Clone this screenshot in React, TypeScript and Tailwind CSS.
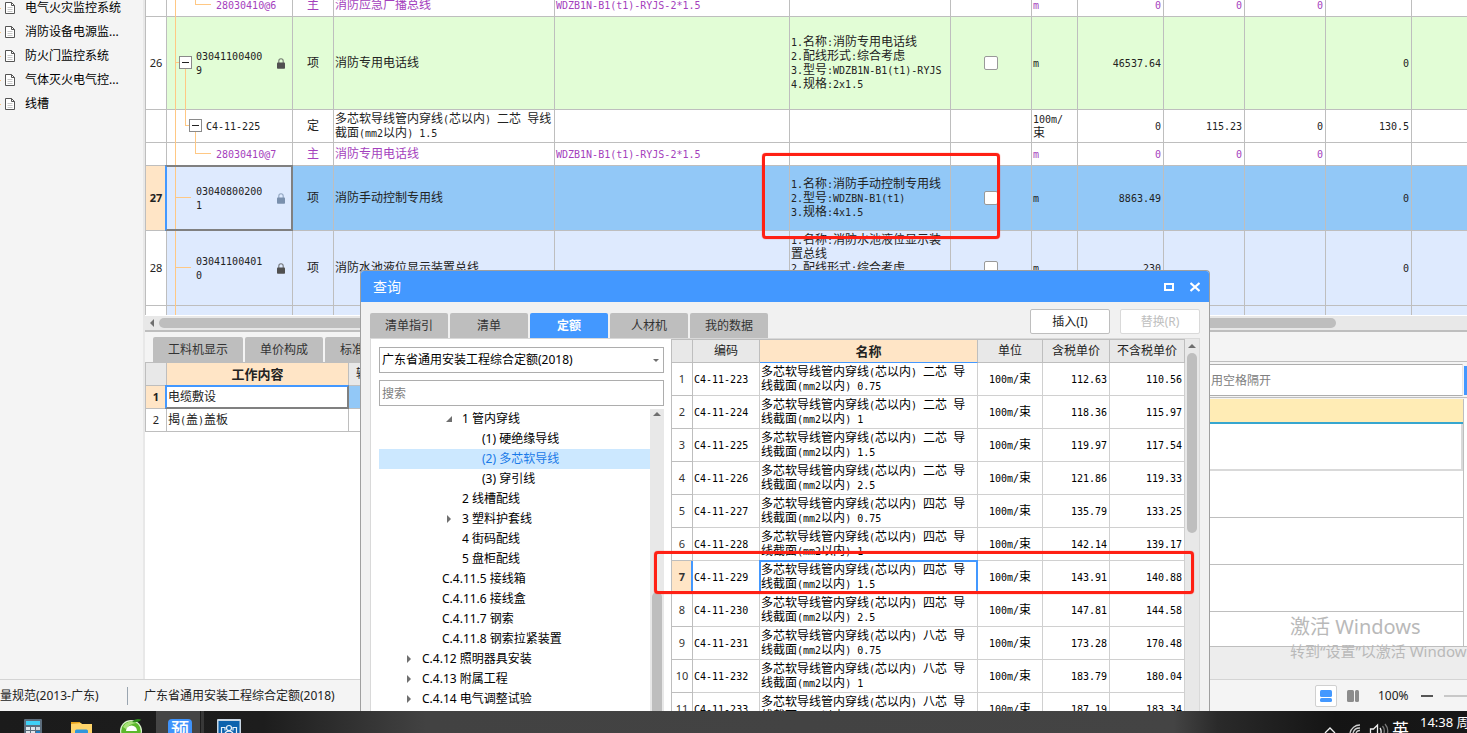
import React from "react";

const LINE = "border-[#bebebe]";

/** Grid text: Latin runs take half the width of a CJK glyph. */
function Mixed({ text }: { text: string }) {
  const lines = text.split("\n");
  return (
    <>
      {lines.map((line, i) => (
        <span key={i} className="block whitespace-pre leading-[14px]">
          {(line.match(/[\x00-\x7f]+|[^\x00-\x7f]+/g) || []).map((run, j) =>
            run.charCodeAt(0) < 128 ? (
              <span key={j} className="text-[10px] leading-none [font-family:'DejaVu_Sans_Mono','Liberation_Mono',monospace]">
                {run}
              </span>
            ) : (
              <span key={j}>{run}</span>
            ),
          )}
        </span>
      ))}
    </>
  );
}

function FileIcon() {
  return (
    <svg className="h-3 w-[10px] shrink-0" viewBox="0 0 10 12" fill="none">
      <path d="M.5.5h6l3 3v8h-9z" fill="#fff" stroke="#555" />
      <path d="M6.5.5v3h3" stroke="#555" />
      <path d="M2.5 5.5h5M2.5 7.5h5M2.5 9.5h5" stroke="#c8c8c8" />
    </svg>
  );
}

function LockIcon({ className }: { className: string }) {
  return (
    <svg className={`h-[11px] w-2 shrink-0 ${className}`} viewBox="0 0 8 11" fill="none">
      <path d="M1.8 5V3a2.2 2.2 0 0 1 4.4 0v2" stroke="currentColor" strokeWidth="1.1" opacity=".75" />
      <rect y="4.6" width="8" height="6.2" rx=".8" fill="currentColor" />
    </svg>
  );
}

const GUIDE = "absolute bg-[#ffc884]";

function Expander({ className }: { className: string }) {
  return (
    <button
      type="button"
      aria-label="折叠"
      className={`absolute top-1/2 -mt-[7px] flex size-[13px] items-center justify-center border border-[#8a8a8a] bg-white ${className}`}
    >
      <span className="h-px w-[7px] bg-[#222]" />
    </button>
  );
}

type Kind = "item" | "quota" | "material" | "leaf" | "blank";
interface BillRow {
  no: string;
  kind: Kind;
  code: string;
  type: string;
  name: string;
  model?: string;
  spec?: string;
  check?: boolean;
  unit: string;
  nums: string[];
  height: string;
  tone: string;
  selected?: boolean;
  muted?: boolean;
}

const billRows: BillRow[] = [
  { no: "", kind: "material", code: "28030410@6", type: "主", name: "消防应急广播总线", model: "WDZB1N-B1(t1)-RYJS-2*1.5", unit: "m", nums: ["0", "0", "0", ""], height: "h-[23px]", tone: "bg-white", muted: true },
  { no: "26", kind: "item", code: "03041100400\n9", type: "项", name: "消防专用电话线", spec: "1.名称:消防专用电话线\n2.配线形式:综合考虑\n3.型号:WDZB1N-B1(t1)-RYJS\n4.规格:2x1.5", check: true, unit: "m", nums: ["46537.64", "", "", "0"], height: "h-[93px]", tone: "bg-[#e2fdd6]" },
  { no: "", kind: "quota", code: "C4-11-225", type: "定", name: "多芯软导线管内穿线(芯以内) 二芯 导线\n截面(mm2以内) 1.5", unit: "100m/\n束", nums: ["0", "115.23", "0", "130.5"], height: "h-[33px]", tone: "bg-white" },
  { no: "", kind: "material", code: "28030410@7", type: "主", name: "消防专用电话线", model: "WDZB1N-B1(t1)-RYJS-2*1.5", unit: "m", nums: ["0", "0", "0", ""], height: "h-[23px]", tone: "bg-white", muted: true },
  { no: "27", kind: "leaf", code: "03040800200\n1", type: "项", name: "消防手动控制专用线", spec: "1.名称:消防手动控制专用线\n2.型号:WDZBN-B1(t1)\n3.规格:4x1.5", check: true, unit: "m", nums: ["8863.49", "", "", "0"], height: "h-[65px]", tone: "bg-[#92c8f7]", selected: true },
  { no: "28", kind: "leaf", code: "03041100401\n0", type: "项", name: "消防水池液位显示装置总线", spec: "1.名称:消防水池液位显示装\n置总线\n2.配线形式:综合考虑\n3.型号:WDZBN-B1(t1)\n4.规格:2x1.5", check: true, unit: "m", nums: ["230", "", "", "0"], height: "h-[75px]", tone: "bg-[#deeafe]" },
  { no: "", kind: "blank", code: "", type: "", name: "", unit: "", nums: ["", "", "", ""], height: "h-[40px]", tone: "bg-[#deeafe]" },
];

const CELL = `border-r border-b ${LINE} p-0 align-middle`;

function CodeCell({ row }: { row: BillRow }) {
  const { kind } = row;
  return (
    <td className={`relative ${CELL} ${row.selected ? "bg-[#deeafe]" : ""}`}>
      <span className={`${GUIDE} -bottom-px left-2 top-0 w-px`} />
      {kind === "item" && (
        <>
          <span className={`${GUIDE} left-2 top-1/2 -mt-px h-px w-1`} />
          <span className={`${GUIDE} -bottom-px left-[18px] top-1/2 w-px`} />
          <Expander className="left-3" />
        </>
      )}
      {kind === "quota" && (
        <>
          <span className={`${GUIDE} bottom-1/2 left-[18px] top-0 w-px`} />
          <span className={`${GUIDE} left-[18px] top-1/2 -mt-px h-px w-2`} />
          <span className={`${GUIDE} -bottom-px left-7 top-1/2 w-px`} />
          <Expander className="left-[22px]" />
        </>
      )}
      {kind === "material" && (
        <>
          <span className={`${GUIDE} bottom-1/2 left-7 top-0 w-px`} />
          <span className={`${GUIDE} left-7 top-1/2 -mt-px h-px w-4`} />
        </>
      )}
      {kind === "leaf" && <span className={`${GUIDE} left-2 top-1/2 -mt-px h-px w-4`} />}
      {row.selected && (
        <span className="absolute -bottom-px -left-0.5 -right-px -top-px border-2 border-[#808080] border-l-[#4398ff]" />
      )}
      <div
        className={`flex items-center justify-between pr-[7px] ${
          kind === "material" ? "pl-[49px]" : kind === "quota" ? "pl-[39px]" : "pl-[29px]"
        }`}
      >
        <div>
          <Mixed text={row.code} />
        </div>
        {(kind === "item" || kind === "leaf") && (
          <LockIcon className={row.selected ? "text-[#7a90ad]" : "text-[#505050]"} />
        )}
      </div>
    </td>
  );
}

function BillTable() {
  return (
    <table className="-mt-1.5 w-full table-fixed border-separate border-spacing-0 text-xs">
      <colgroup>
        <col className="w-[21px]" />
        <col className="w-[126px]" />
        <col className="w-[41px]" />
        <col className="w-[221px]" />
        <col className="w-[235px]" />
        <col className="w-[161px]" />
        <col className="w-[81px]" />
        <col className="w-[46px]" />
        <col className="w-[86px]" />
        <col className="w-[81px]" />
        <col className="w-[81px]" />
        <col className="w-[86px]" />
        <col />
      </colgroup>
      <tbody>
        {billRows.map((r, i) => (
          <tr key={i} className={`${r.height} ${r.tone} ${r.muted ? "text-[#a43fbd]" : "text-[#222]"}`}>
            <td
              className={`${CELL} text-center text-[11px] ${
                r.selected ? "bg-[#ffe5c6] text-xs font-bold" : "bg-white"
              }`}
            >
              {r.no}
            </td>
            <CodeCell row={r} />
            <td className={`${CELL} text-center`}>{r.type}</td>
            <td className={`${CELL} overflow-hidden pl-px`}>
              <Mixed text={r.name} />
            </td>
            <td className={`${CELL} pl-px`}>
              <Mixed text={r.model || ""} />
            </td>
            <td className={`${CELL} pl-px`}>
              <Mixed text={r.spec || ""} />
            </td>
            <td className={`${CELL} text-center`}>
              {r.check && (
                <input
                  type="checkbox"
                  aria-label={`${r.no} 主要清单`}
                  className="mx-auto block size-3.5 appearance-none rounded-xs border border-[#999] bg-white"
                />
              )}
            </td>
            <td className={`${CELL} pl-px`}>
              <Mixed text={r.unit} />
            </td>
            {r.nums.map((n, j) => (
              <td key={j} className={`${CELL} pr-0.5 text-right`}>
                <Mixed text={n} />
              </td>
            ))}
            <td className={`border-b ${LINE} p-0`} />
          </tr>
        ))}
      </tbody>
    </table>
  );
}

const systems = ["电气火灾监控系统", "消防设备电源监...", "防火门监控系统", "气体灭火电气控...", "线槽"];

function Sidebar() {
  return (
    <nav className="w-[145px] shrink-0 overflow-hidden border-r-2 border-[#e8e8e8] bg-[#f4f4f4]">
      <ul className="-mt-1">
        {systems.map((s) => (
          <li key={s} className="flex h-6 items-center text-xs text-black">
            <span className="mr-1 h-px w-px bg-[#ffc884]" />
            <FileIcon />
            <a href="#" className="ml-2.5 whitespace-nowrap">
              {s}
            </a>
          </li>
        ))}
      </ul>
    </nav>
  );
}

function WorkPanel() {
  const tab = "h-[25px] rounded-t-xs bg-[#bebebe] text-center text-xs text-[#333]";
  return (
    <section className="min-w-0 flex-1 overflow-hidden bg-white">
      <div className="flex h-[30px] items-end gap-0.5 bg-[#f4f4f4] pl-2">
        <button type="button" className={`${tab} w-[90px]`}>工料机显示</button>
        <button type="button" className={`${tab} w-[78px]`}>单价构成</button>
        <button type="button" className={`${tab} w-[78px]`}>标准换算</button>
      </div>
      <table className={`w-full table-fixed border-separate border-spacing-0 border-l border-t ${LINE} text-xs text-[#222]`}>
        <colgroup>
          <col className="w-[21px]" />
          <col className="w-[182px]" />
          <col />
        </colgroup>
        <thead>
          <tr className="h-[23px] bg-[#e8e8e8]">
            <th className={CELL} />
            <th className={`${CELL} bg-[#ffe5c6] text-[13px] font-bold leading-[18px]`}>工作内容</th>
            <th className={`${CELL} pl-[7px] text-left font-normal`}>输出</th>
          </tr>
        </thead>
        <tbody>
          <tr className="h-[23px]">
            <td className={`${CELL} bg-[#ffe5c6] text-center text-[11px] font-bold`}>1</td>
            <td className={`relative ${CELL} pl-px`}>
              <span className="absolute -bottom-px -left-0.5 -right-px -top-px border-2 border-[#808080] border-l-[#4398ff] border-t-[#4398ff]" />
              <Mixed text="电缆敷设" />
            </td>
            <td className={`${CELL} bg-[#92c8f7]`} />
          </tr>
          <tr className="h-[23px]">
            <td className={`${CELL} text-center text-[11px]`}>2</td>
            <td className={`${CELL} pl-px`}>
              <Mixed text="揭(盖)盖板" />
            </td>
            <td className={CELL} />
          </tr>
        </tbody>
      </table>
    </section>
  );
}

function FilterPanel() {
  return (
    <section className="flex w-[257px] shrink-0 flex-col bg-[#f4f4f4]">
      <div className={`h-[30px] border-b ${LINE}`} />
      <div className="mt-0.5 flex h-8 items-center">
        <input
          aria-label="关键字"
          placeholder="用空格隔开"
          className="h-8 min-w-0 flex-1 border-y border-r border-y-[#adadad] border-r-[#e8e8e8] bg-white pl-px text-xs placeholder:text-[#808080]"
        />
        <button type="button" aria-label="查找" className="ml-px h-[29px] w-[3px] bg-[#4398ff]" />
      </div>
      <div className={`mt-px h-0.5 border-t ${LINE}`} />
      <div className="flex flex-1 flex-col bg-white">
        <div className={`mr-[3px] flex flex-col border-r ${LINE}`}>
          <div className="h-[25px] border-b-2 border-[#36a6cf] bg-[#ffecb5]" />
          <div className="h-[47px] border-b-2 border-r-2 border-[#d9d9d9]" />
          <div className={`h-[47px] border-b ${LINE}`} />
          <div className={`h-[47px] border-b ${LINE}`} />
          <div className={`h-[47px] border-b ${LINE}`} />
          <div className="h-[34px]" />
        </div>
        <div className={`flex-1 border-t ${LINE} bg-[#ededed]`} />
      </div>
    </section>
  );
}

function Triangle({ dir }: { dir: "left" | "up" | "right" | "down" | "open" }) {
  const d = {
    left: "M7 1v8L3 5z",
    up: "M1 7h8L5 3z",
    right: "M3 1v8l4-4z",
    down: "M2 4h6L5 7z",
    open: "M8 2v6H2z",
  }[dir];
  return (
    <svg className="size-2.5 shrink-0" viewBox="0 0 10 10">
      <path d={d} fill="#6f6f6f" />
    </svg>
  );
}

interface Node {
  label: string;
  pad: string;
  mark?: "right" | "open";
  active?: boolean;
}
const nodes: Node[] = [
  { label: "1 管内穿线", pad: "pl-[65px]", mark: "open" },
  { label: "(1) 硬绝缘导线", pad: "pl-[85px]" },
  { label: "(2) 多芯软导线", pad: "pl-[85px]", active: true },
  { label: "(3) 穿引线", pad: "pl-[85px]" },
  { label: "2 线槽配线", pad: "pl-[65px]" },
  { label: "3 塑料护套线", pad: "pl-[65px]", mark: "right" },
  { label: "4 街码配线", pad: "pl-[65px]" },
  { label: "5 盘柜配线", pad: "pl-[65px]" },
  { label: "C.4.11.5 接线箱", pad: "pl-[45px]" },
  { label: "C.4.11.6 接线盒", pad: "pl-[45px]" },
  { label: "C.4.11.7 钢索", pad: "pl-[45px]" },
  { label: "C.4.11.8 钢索拉紧装置", pad: "pl-[45px]" },
  { label: "C.4.12 照明器具安装", pad: "pl-[25px]", mark: "right" },
  { label: "C.4.13 附属工程", pad: "pl-[25px]", mark: "right" },
  { label: "C.4.14 电气调整试验", pad: "pl-[25px]", mark: "right" },
];

const quotas: [string, string, string, string, string][] = [
  ["C4-11-223", "二", "0.75", "112.63", "110.56"],
  ["C4-11-224", "二", "1", "118.36", "115.97"],
  ["C4-11-225", "二", "1.5", "119.97", "117.54"],
  ["C4-11-226", "二", "2.5", "121.86", "119.33"],
  ["C4-11-227", "四", "0.75", "135.79", "133.25"],
  ["C4-11-228", "四", "1", "142.14", "139.17"],
  ["C4-11-229", "四", "1.5", "143.91", "140.88"],
  ["C4-11-230", "四", "2.5", "147.81", "144.58"],
  ["C4-11-231", "八", "0.75", "173.28", "170.48"],
  ["C4-11-232", "八", "1", "183.79", "180.04"],
  ["C4-11-233", "八", "1.5", "187.19", "183.34"],
];

function QuotaTable() {
  const cell = "border-r border-b border-[#d0d0d0] p-0 align-middle";
  const head = `border-r border-b ${LINE} p-0 text-center font-normal`;
  return (
    <div className={`min-w-0 flex-1 overflow-hidden border-l border-t ${LINE} bg-white`}>
      <table className="w-full table-fixed border-separate border-spacing-0 text-xs text-black">
        <colgroup>
          <col className="w-[21px]" />
          <col className="w-[67px]" />
          <col className="w-[218px]" />
          <col className="w-[65px]" />
          <col className="w-[67px]" />
          <col />
        </colgroup>
        <thead>
          <tr className="h-[23px] bg-[#e8e8e8] text-[#222]">
            <th className={head} />
            <th className={head}>编码</th>
            <th className="border-b border-r border-b-[#4398ff] border-r-[#bebebe] bg-[#ffe5c6] p-0 text-center text-[13px] font-bold leading-[18px]">
              名称
            </th>
            <th className={head}>单位</th>
            <th className={head}>含税单价</th>
            <th className={head}>不含税单价</th>
          </tr>
        </thead>
        <tbody>
          {quotas.map(([code, cores, size, taxed, net], i) => {
            const on = i === 6;
            return (
              <tr key={code} className="h-[33px]">
                <td
                  className={`relative border-b border-r ${LINE} p-0 text-center align-middle text-[11px] text-[#333] ${
                    on ? "bg-[#ffe5c6] font-bold" : ""
                  }`}
                >
                  {on && <span className="absolute -right-px bottom-0 top-0 w-0.5 bg-[#4398ff]" />}
                  {i + 1}
                </td>
                <td className={`${cell} pl-px`}>
                  <Mixed text={code} />
                </td>
                <td className={`relative ${cell} pl-px`}>
                  {on && <span className="absolute -bottom-px -left-px -right-px -top-px border-2 border-[#4398ff]" />}
                  <Mixed text={`多芯软导线管内穿线(芯以内) ${cores}芯 导\n线截面(mm2以内) ${size}`} />
                </td>
                <td className={`${cell} text-center`}>
                  <Mixed text="100m/束" />
                </td>
                <td className={`${cell} pr-0.5 text-right`}>
                  <Mixed text={taxed} />
                </td>
                <td className={`${cell} pr-0.5 text-right`}>
                  <Mixed text={net} />
                </td>
              </tr>
            );
          })}
        </tbody>
      </table>
    </div>
  );
}

function QueryDialog() {
  const tabs = ["清单指引", "清单", "定额", "人材机", "我的数据"];
  return (
    <div
      role="dialog"
      aria-label="查询"
      className="absolute bottom-0 left-[360px] top-[270px] flex w-[850px] flex-col overflow-hidden rounded-t border border-b-0 border-[#9f9f9f] bg-[#f1f1f1]"
    >
      <header className="flex h-[31px] shrink-0 items-center justify-between bg-[#4398ff] pl-3 pr-[9px] text-white">
        <h1 className="text-sm">查询</h1>
        <div className="flex gap-4">
          <button type="button" aria-label="最大化">
            <svg className="size-2.5" viewBox="0 0 10 10" fill="none">
              <path d="M1 2h8v6H1z" stroke="#fff" strokeWidth="2" />
            </svg>
          </button>
          <button type="button" aria-label="关闭">
            <svg className="size-2.5" viewBox="0 0 10 10" fill="none">
              <path d="M.5 1l9 8M9.5 1l-9 8" stroke="#fff" strokeWidth="2.2" />
            </svg>
          </button>
        </div>
      </header>
      <div className="flex h-9 shrink-0 items-end justify-between px-[9px] text-xs">
        <div role="tablist" className="flex gap-0.5">
          {tabs.map((t) => (
            <button
              key={t}
              type="button"
              role="tab"
              aria-selected={t === "定额"}
              className={`h-[25px] w-[78px] rounded-t-xs ${
                t === "定额" ? "bg-[#4398ff] font-bold text-white" : "bg-[#bebebe] text-[#333]"
              }`}
            >
              {t}
            </button>
          ))}
        </div>
        <div className="mb-1 flex gap-2.5">
          <button type="button" className={`h-[25px] w-20 rounded-xs border ${LINE} bg-white text-[#222]`}>
            插入(I)
          </button>
          <button type="button" disabled className="h-[25px] w-20 rounded-xs border border-[#d9d9d9] bg-white text-[#bebebe]">
            替换(R)
          </button>
        </div>
      </div>
      <div className="mx-[9px] flex min-h-0 flex-1 border-x border-t border-[#d9d9d9]">
        <div className="flex w-[300px] shrink-0 flex-col bg-white pl-2 pr-[7px] pt-2">
          <div className="relative shrink-0">
            <select
              aria-label="定额库"
              className="block h-[26px] w-full appearance-none border border-[#adadad] bg-white pl-0.5 text-xs text-black"
            >
              <option>广东省通用安装工程综合定额(2018)</option>
            </select>
            <span className="pointer-events-none absolute right-[3px] top-2 flex">
              <Triangle dir="down" />
            </span>
          </div>
          <input
            aria-label="搜索"
            placeholder="搜索"
            className="mt-[7px] h-[26px] shrink-0 border border-[#adadad] bg-white pl-0.5 text-xs placeholder:text-[#808080]"
          />
          <div className="mt-[3px] flex min-h-0 flex-1">
            <ul className="min-w-0 flex-1 overflow-hidden text-xs text-black">
              {nodes.map((n) => (
                <li
                  key={n.label}
                  className={`flex h-5 items-center whitespace-nowrap ${n.pad} ${
                    n.active ? "bg-[#cce8ff] text-[#1a7ae8]" : ""
                  }`}
                >
                  <span className="mr-2 flex size-2.5 shrink-0">{n.mark && <Triangle dir={n.mark} />}</span>
                  {n.label}
                </li>
              ))}
            </ul>
            <div className="flex w-3.5 flex-col items-center bg-[#e8e8e8]">
              <Triangle dir="up" />
              <div className="mt-[173px] w-2.5 flex-1 rounded-t-full bg-[#bebebe]" />
            </div>
          </div>
        </div>
        <QuotaTable />
        <div className="flex w-3.5 shrink-0 flex-col items-center bg-[#e8e8e8] pt-0.5">
          <Triangle dir="up" />
          <div className="mt-0.5 h-[180px] w-2.5 rounded-full bg-[#bebebe]" />
        </div>
      </div>
    </div>
  );
}

function StatusBar() {
  return (
    <footer className="flex h-8 shrink-0 items-center border-t border-[#d4d4d4] bg-[#f4f4f4] text-xs text-[#222]">
      <span className="w-[127px] whitespace-nowrap">量规范(2013-广东)</span>
      <span className="mr-4 h-[18px] w-px bg-[#9aa5b0]" />
      <span className="flex-1 whitespace-nowrap">广东省通用安装工程综合定额(2018)</span>
      <button type="button" aria-label="上下布局" className="flex size-[22px] items-center justify-center rounded-xs border border-[#d0d0d0] bg-white">
        <svg className="size-3" viewBox="0 0 12 12" fill="#4398ff">
          <rect width="12" height="7" rx="1.5" />
          <rect y="8" width="12" height="4" rx="1.5" />
        </svg>
      </button>
      <button type="button" aria-label="左右布局" className="ml-2.5 flex">
        <svg className="size-3" viewBox="0 0 12 12" fill="#8c8c8c">
          <rect width="7" height="12" rx="1.5" />
          <rect x="8" width="4" height="12" rx="1.5" />
        </svg>
      </button>
      <span className="ml-[19px] w-[43px]">100%</span>
      <button type="button" aria-label="缩小" className="h-0.5 w-3 bg-[#555]" />
      <div className="ml-[11px] flex w-[23px] items-center overflow-hidden">
        <input
          type="range"
          aria-label="缩放"
          defaultValue={50}
          className="h-0.5 w-[120px] shrink-0 appearance-none bg-[#c8c8c8]"
        />
      </div>
    </footer>
  );
}

function Taskbar() {
  return (
    <div className="flex h-[22px] shrink-0 overflow-hidden bg-[linear-gradient(90deg,#1b1b1b_0%,#1d1d1d_18%,#424242_29%,#444_80%,#2a2a2a_83%,#141414_91%,#181818_100%)] text-white">
      <svg className="h-[22px] w-[260px] shrink-0" viewBox="0 0 260 22">
        <path d="M156 0h44v22h-44z" fill="#454545" />
        <path d="M201 0h3v22h-3z" fill="#383838" />
        <rect x="24" y="8" width="18" height="20" rx="1" fill="#5c6d7c" />
        <path d="M26 10h14v4H26z" fill="#3fd0f5" />
        <path d="M26 16h4v3h-4zM31 16h4v3h-4zM26 20h4v3h-4zM31 20h4v3h-4z" fill="#dfe6ec" />
        <path d="M36 16h4v3h-4z" fill="#cdd6dd" />
        <path d="M36 20h4v3h-4z" fill="#1e7fc4" />
        <path d="M71 11h9l1 2h-10z" fill="#e5a11a" />
        <path d="M71 13l10-1 1 1h10v10H71z" fill="#ffd56b" />
        <path d="M75 22v-2q0-1.500 1.500-1.500h10q1.500 0 1.500 1.500v2z" fill="#2f96dc" />
        <circle cx="131" cy="20" r="11" fill="#dff5d2" />
        <circle cx="131" cy="20" r="9.800" fill="#5cb82c" />
        <path d="M123 16a9 9 0 0 1 13-4 14 14 0 0 0-10 6z" fill="#a8e27a" />
        <path d="M126 20a5.500 5.500 0 0 1 11 0z" fill="#fff" />
        <path d="M132 11q3-4 9-2.500-2 3.500-9 2.500z" fill="#2e8b1c" />
        <rect x="168" y="8" width="24" height="24" rx="4" fill="#3f93fb" />
        <text x="180" y="25" textAnchor="middle" fontSize="18" fontWeight="500" fill="#fff">
          预
        </text>
        <rect x="217" y="8" width="24" height="22" rx="1" fill="#c9d7e4" />
        <path d="M218.500 10h21v14h-21z" fill="#0d62ad" />
        <g fill="none" stroke="#e6f1fa" strokeWidth="1.200">
          <path d="M221.500 22v-5.500h3.500v3M236.500 22v-5.500h-3.500v3" />
          <circle cx="229" cy="17" r="2.500" />
          <path d="M225 22q4-4 8 0" />
        </g>
      </svg>
      <div className="ml-auto flex">
        <svg className="h-[22px] w-[70px] shrink-0" viewBox="0 0 70 22" fill="none" stroke="#f0f0f0" strokeWidth="1.300">
          <path d="M3 22l5-5 5 5" />
          <path d="M28 22a10 10 0 0 1 10-8M31 22a7 7 0 0 1 7-5M34 22a4 4 0 0 1 4-2.500" stroke="#d0d0d0" />
          <path d="M48.500 22v-4h3l4-4v8" />
          <path d="M58 17q1.500 2 1 5" />
          <path d="M60.500 15q2.500 3 1.500 7M63 13q3.500 4 2.500 9" stroke="#7a7a7a" />
        </svg>
        <span className="w-[27px] pt-[9px] text-[17px] leading-[20px]">英</span>
        <span className="w-12 overflow-hidden whitespace-nowrap pl-px pt-[3px] text-[13px] leading-[16px]">14:38 周</span>
      </div>
    </div>
  );
}

function Highlight({ className }: { className: string }) {
  return (
    <div
      className={`pointer-events-none absolute rounded border-[3px] border-[#ff2014] shadow-[0_0_1px_#ff2014] ${className}`}
    />
  );
}

export default function App() {
  return (
    <div className="flex h-screen flex-col overflow-hidden bg-white [font-family:'Noto_Sans','Noto_Sans_CJK_SC',sans-serif]">
      <div className="relative flex min-h-0 flex-1 flex-col overflow-hidden">
        <div className="flex min-h-0 flex-1">
          <Sidebar />
          <main className="flex min-w-0 flex-1 flex-col">
            <div className={`h-[315px] shrink-0 overflow-hidden border-l ${LINE}`}>
              <BillTable />
            </div>
            <div className={`mt-px flex h-4 shrink-0 items-center border-b-2 ${LINE} bg-[#e8e8e8] pl-0.5`}>
              <Triangle dir="left" />
              <div className="ml-0.5 mr-[131px] h-2.5 flex-1 rounded-full bg-[#bebebe]" />
            </div>
            <div className="flex min-h-0 flex-1">
              <WorkPanel />
              <FilterPanel />
            </div>
          </main>
        </div>
        <StatusBar />
        <div className="pointer-events-none absolute bottom-[50px] left-[1290px] whitespace-nowrap text-[#b9b9b9]">
          <p className="text-xl leading-7">激活 Windows</p>
          <p className="text-[15px] leading-5">转到“设置”以激活 Windows</p>
        </div>
        <QueryDialog />
        <Highlight className="left-[762px] top-[153px] h-[86px] w-[238px]" />
        <Highlight className="left-[654px] top-[551px] h-[43px] w-[540px]" />
      </div>
      <Taskbar />
    </div>
  );
}
